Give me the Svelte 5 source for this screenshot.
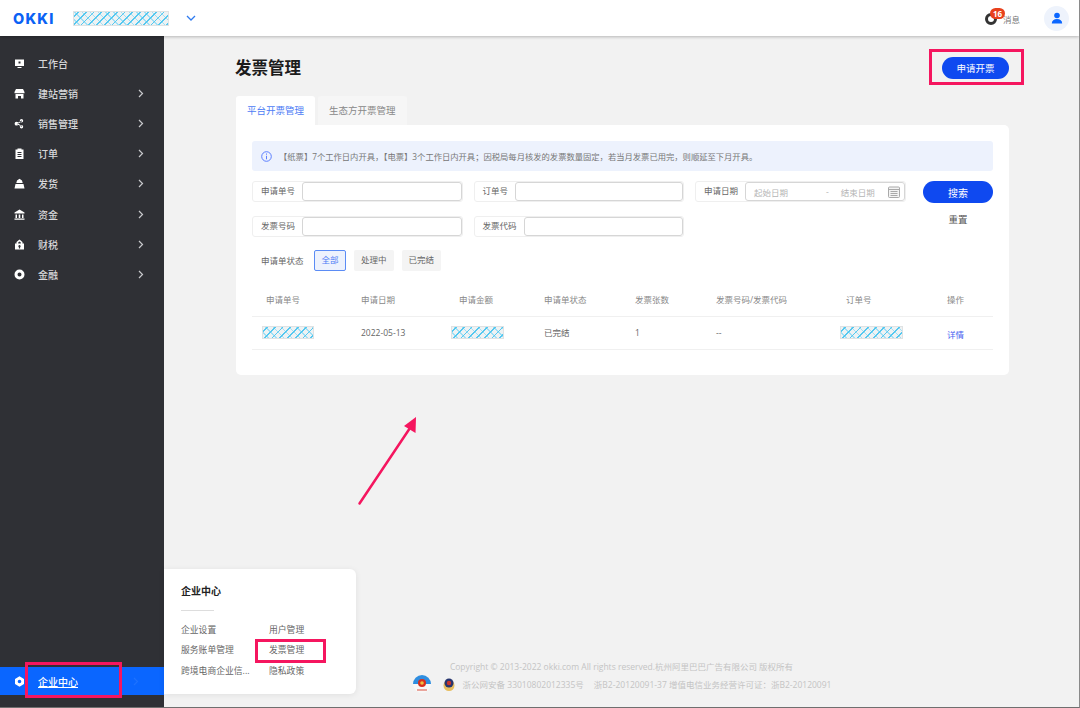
<script>
  const menu = [
    { label: '工作台', icon: 'desk' },
    { label: '建站营销', icon: 'shop', more: true },
    { label: '销售管理', icon: 'share', more: true },
    { label: '订单', icon: 'order', more: true },
    { label: '发货', icon: 'ship', more: true },
    { label: '资金', icon: 'bank', more: true },
    { label: '财税', icon: 'tax', more: true },
    { label: '金融', icon: 'coin', more: true }
  ];

  const icons = {
    desk: 'M1 1.500h9v6.500H1z M4.500 3.500v2h2v-2z M3.500 9h4v1h-4z',
    shop: 'M2 1h7l1.500 3v1.200h-10V4z M1.500 6h8v4.500H7V8H4v2.500H1.500z',
    share: 'M7.500 1a1.700 1.700 0 1 1 0 3.400a1.700 1.700 0 0 1 0-3.400z M2.500 3.800a1.900 1.900 0 1 1 0 3.800a1.900 1.900 0 0 1 0-3.800z M7.500 7a1.700 1.700 0 1 1 0 3.400a1.700 1.700 0 0 1 0-3.400z M3.500 5l4-2.500.5.700-4 2.500z M4 5.500l4 2.500-.5.700-4-2.500z',
    order: 'M1.500 1.500h2V.5h4v1h2v9.500h-8z M3.500 4v1h4V4z M3.500 6v1h4V6z M3.500 8v1h4V8z',
    ship: 'M5.500.8l2.500 1.700.7 2.500H2.300L3 2.500z M1.500 6h8l1 4.500h-10z',
    bank: 'M5.500.5l5 3v1h-10v-1z M1.500 5.500h1.500v3.500H1.500z M4.700 5.500h1.600v3.500H4.700z M8 5.500h1.500v3.500H8z M.5 9.500h10v1.200H.5z',
    tax: 'M5.500.5l3 2.500v1.500h1.500v6H1v-6h1.500V3z M4.200 4.500h2.600V3.600L5.500 2.500 4.200 3.600z M5.500 6a1.200 1.200 0 0 0-.6 2.200V9.500h1.200V8.200A1.200 1.200 0 0 0 5.500 6z',
    coin: 'M5.500.5a5 5 0 1 1 0 10a5 5 0 0 1 0-10z M5.500 3.500a2 2 0 1 0 0 4a2 2 0 0 0 0-4z',
    gear: 'M5.500.3l4.500 2.600v5.200l-4.500 2.600L1 8.100V2.900z M5.500 3.700a1.800 1.800 0 1 0 0 3.600a1.800 1.800 0 0 0 0-3.600z'
  };

  const columns = ['申请单号', '申请日期', '申请金额', '申请单状态', '发票张数', '发票号码/发票代码', '订单号', '操作'];
  const links = ['企业设置', '用户管理', '服务账单管理', '发票管理', '跨境电商企业信...', '隐私政策'];
</script>

<div class="page">
  <header class="topbar">
    <span class="logo">OKKI</span>
    <span class="mosaic company"></span>
    <svg class="caret" width="10" height="6" viewBox="0 0 10 6"><path d="M1 1l4 4 4-4" fill="none" stroke="#2f7bf0" stroke-width="1.300" /></svg>
    <div class="top-right">
      <div class="msg">
        <span class="ring"></span>
        <span class="badge">16</span>
        <span class="msg-text">消息</span>
      </div>
      <div class="avatar">
        <svg width="12" height="12" viewBox="0 0 12 12"><circle cx="6" cy="3.500" r="2.800" fill="#0a66ff" /><path d="M.8 11.500c0-3 2.200-4.500 5.200-4.500s5.200 1.500 5.200 4.500z" fill="#0a66ff" /></svg>
      </div>
    </div>
  </header>

  <div class="body">
    <aside class="sidebar">
      <nav class="nav">
        {#each menu as item}
          <div class="nav-item">
            <svg class="nav-icon" width="11" height="11" viewBox="0 0 11 11"><path d={icons[item.icon]} fill="#fff" fill-rule="evenodd" /></svg>
            <span>{item.label}</span>
            {#if item.more}
              <svg class="chev" width="6" height="9" viewBox="0 0 6 9"><path d="M1 1l3.500 3.500L1 8" fill="none" stroke="#c9cacd" stroke-width="1.200" /></svg>
            {/if}
          </div>
        {/each}
      </nav>
      <div class="nav-item active">
        <svg class="nav-icon" width="11" height="11" viewBox="0 0 11 11"><path d={icons.gear} fill="#fff" fill-rule="evenodd" /></svg>
        <span class="active-label">企业中心</span>
        <svg class="chev dim" width="6" height="9" viewBox="0 0 6 9"><path d="M1 1l3.500 3.500L1 8" fill="none" stroke="#1d72ff" stroke-width="1.200" /></svg>
      </div>
    </aside>

    <main class="main">
      <div class="content">
        <div class="head">
          <h1>发票管理</h1>
          <button class="pill apply">申请开票</button>
        </div>

        <div class="tabs">
          <div class="tab current">平台开票管理</div>
          <div class="tab">生态方开票管理</div>
        </div>

        <section class="card">
          <div class="alert">
            <svg width="11" height="11" viewBox="0 0 11 11"><circle cx="5.500" cy="5.500" r="4.800" fill="none" stroke="#5b7fff" stroke-width="1" /><path d="M5.500 2.500v1.200M5.500 4.800v3.500" stroke="#5b7fff" stroke-width="1" /></svg>
            <span>【纸票】7个工作日内开具，【电票】3个工作日内开具；因税局每月核发的发票数量固定，若当月发票已用完，则顺延至下月开具。</span>
          </div>

          <div class="form">
            <div class="fields">
              <div class="group"><label for="f1">申请单号</label><input id="f1" /></div>
              <div class="group"><label for="f2" class="tight">订单号</label><input id="f2" /></div>
              <div class="group">
                <span class="group-label">申请日期</span>
                <div class="range">
                  <span>起始日期</span>
                  <span class="dash">-</span>
                  <span class="end">结束日期</span>
                  <svg width="12" height="12" viewBox="0 0 12 12"><rect x=".5" y="1" width="11" height="10.500" rx="1" fill="#f3f3f3" stroke="#a9a9a9" /><path d="M.5 3.500h11M2.500 5.500h7M2.500 7.500h7M2.500 9.500h7" stroke="#a9a9a9" /></svg>
                </div>
              </div>
              <div class="group"><label for="f3">发票号码</label><input id="f3" /></div>
              <div class="group"><label for="f4">发票代码</label><input id="f4" /></div>
            </div>
            <div class="actions">
              <button class="pill search">搜索</button>
              <span class="reset">重置</span>
            </div>
          </div>

          <div class="status">
            <span class="status-label">申请单状态</span>
            <span class="chip on">全部</span>
            <span class="chip">处理中</span>
            <span class="chip">已完结</span>
          </div>

          <div class="table">
            <div class="row">
              {#each columns as col}
                <span class="th">{col}</span>
              {/each}
            </div>
            <div class="row">
              <span class="mosaic m1"></span>
              <span>2022-05-13</span>
              <span class="mosaic m2"></span>
              <span>已完结</span>
              <span>1</span>
              <span>--</span>
              <span class="mosaic m3"></span>
              <span class="detail">详情</span>
            </div>
          </div>
        </section>
      </div>

      <footer class="footer">
        <div>Copyright © 2013-2022 okki.com All rights reserved.杭州阿里巴巴广告有限公司 版权所有</div>
        <div class="beian">
          <svg width="20" height="19" viewBox="0 0 20 19"><circle cx="10" cy="9" r="9" fill="#f8f8f8" /><path d="M1 9a9 9 0 0 1 18 0z" fill="#2f8ee0" /><circle cx="10" cy="8" r="4" fill="#d8301f" /><circle cx="10" cy="8" r="1.800" fill="#f0c040" /><path d="M5 15h10" stroke="#e58a7e" stroke-width="1.500" /></svg>
          <svg class="police" width="12" height="15" viewBox="0 0 12 15"><circle cx="6" cy="8.500" r="5.500" fill="#e7bd5d" /><circle cx="6" cy="6" r="4.500" fill="#27366f" /><circle cx="6" cy="6" r="2.200" fill="#c9352b" /></svg>
          <span>浙公网安备 33010802012335号</span>
          <span class="lic">浙B2-20120091-37 增值电信业务经营许可证：浙B2-20120091</span>
        </div>
      </footer>
    </main>
  </div>

  <div class="popover">
    <div class="pop-title">企业中心</div>
    <div class="pop-line"></div>
    <div class="pop-links">
      {#each links as link}
        <span>{link}</span>
      {/each}
    </div>
  </div>

  <div class="mark mark-apply"></div>
  <div class="mark mark-side"></div>
  <div class="mark mark-link"></div>
  <svg class="arrow" width="70" height="100" viewBox="0 0 70 100">
    <path d="M9.500 93.500L60 18" stroke="#f5165f" stroke-width="2.500" stroke-linecap="round" />
    <path d="M66 7L65.500 23L54 16z" fill="#f5165f" />
  </svg>
</div>

<style>
  :global(body) {
    margin: 0;
    background: #f2f2f2;
  }

  .page {
    position: relative;
    width: 1080px;
    height: 708px;
    box-sizing: border-box;
    border-right: 1px solid #8a8a8a;
    border-bottom: 1px solid #6f6f6f;
    display: flex;
    flex-direction: column;
    overflow: hidden;
    font-family: "Open Sans", "Noto Sans CJK SC", sans-serif;
    font-size: 8.500px;
    color: #666;
    background: #f2f2f2;
  }

  .mosaic {
    display: block;
    box-sizing: border-box;
    border: 1px solid #dfe2e3;
    background-color: #eef2f3;
    background-image:
      repeating-linear-gradient(135deg, transparent 0 2.500px, #55c8f0 2.500px 3.700px, transparent 3.700px 5.500px),
      repeating-linear-gradient(45deg, transparent 0 3.500px, #9fdff5 3.500px 4.500px, transparent 4.500px 5.500px);
  }

  .topbar {
    height: 36px;
    flex: none;
    display: flex;
    align-items: center;
    background: #fff;
    box-shadow: 0 1px 3px rgba(0, 0, 0, 0.25);
    position: relative;
    z-index: 2;
    padding: 0 10px 0 13px;
  }

  .logo {
    width: 60px;
    color: #0a62f5;
    font-family: "Inter", "Liberation Sans", sans-serif;
    font-weight: 800;
    font-size: 14.500px;
    letter-spacing: 1.200px;
  }

  .company {
    width: 96px;
    height: 15px;
  }

  .caret {
    margin-left: 17px;
  }

  .top-right {
    margin-left: auto;
    display: flex;
    align-items: center;
    gap: 24px;
  }

  .msg {
    position: relative;
    width: 35px;
    height: 24px;
  }

  .ring {
    position: absolute;
    left: 0;
    top: 7px;
    width: 6px;
    height: 6px;
    border: 3px solid #333;
    border-radius: 50%;
  }

  .badge {
    position: absolute;
    left: 5px;
    top: 2px;
    width: 15px;
    height: 11px;
    border-radius: 6px;
    background: #e8401c;
    color: #fff;
    font-size: 8px;
    font-weight: 700;
    line-height: 11px;
    text-align: center;
  }

  .msg-text {
    position: absolute;
    left: 18px;
    top: 8px;
    font-size: 8.500px;
    line-height: 12px;
    color: #777;
  }

  .avatar {
    width: 25px;
    height: 25px;
    border-radius: 50%;
    background: #eef3fc;
    display: flex;
    align-items: center;
    justify-content: center;
  }

  .body {
    flex: 1;
    display: flex;
    min-height: 0;
  }

  .sidebar {
    width: 164px;
    flex: none;
    background: #2f3035;
    display: flex;
    flex-direction: column;
  }

  .nav {
    padding-top: 12px;
  }

  .nav-item {
    height: 30.200px;
    display: flex;
    align-items: center;
    padding-left: 14px;
    color: #d8d8da;
    font-size: 10px;
    font-weight: 500;
    position: relative;
  }

  .nav-icon {
    margin-right: 13px;
  }

  .chev {
    position: absolute;
    left: 138px;
  }

  .chev.dim {
    left: 133px;
  }

  .active {
    height: 28px;
    margin-top: auto;
    margin-bottom: 12px;
    background: #0a66ff;
    color: #fff;
  }

  .active-label {
    text-decoration: underline;
  }

  .main {
    flex: 1;
    display: flex;
    flex-direction: column;
    min-width: 0;
  }

  .content {
    width: 773px;
    margin-left: 72px;
    padding-top: 21px;
  }

  .head {
    display: flex;
    align-items: center;
    justify-content: space-between;
    height: 21px;
  }

  h1 {
    margin: -2px 0 0 -1px;
    font-size: 16.500px;
    font-weight: 700;
    color: #1c1c1c;
  }

  .pill {
    border: none;
    border-radius: 12px;
    background: #0f49f0;
    color: #fff;
    font-family: inherit;
    padding: 0;
  }

  .apply {
    width: 67px;
    height: 22px;
    font-size: 9.500px;
  }

  .tabs {
    display: flex;
    gap: 3px;
    margin-top: 18px;
  }

  .tab {
    height: 29px;
    line-height: 29px;
    padding: 0 11px;
    font-size: 9.500px;
    color: #888;
    background: #f6f6f6;
    border-radius: 3px 3px 0 0;
  }

  .tab.current {
    background: #fff;
    color: #4d7cf5;
  }

  .card {
    height: 250px;
    box-sizing: border-box;
    padding: 16px;
    background: #fff;
    border-radius: 0 5px 5px 5px;
  }

  .alert {
    height: 30px;
    display: flex;
    align-items: center;
    gap: 7px;
    padding-left: 9px;
    background: #edf2fd;
    border-radius: 3px;
    font-size: 8.300px;
    color: #777;
  }

  .form {
    display: flex;
    justify-content: space-between;
    margin-top: 10px;
  }

  .fields {
    display: grid;
    grid-template-columns: repeat(3, 210.500px);
    column-gap: 11px;
    row-gap: 14px;
  }

  .group {
    height: 21px;
    box-sizing: border-box;
    display: flex;
    border: 1px solid #efefef;
    border-radius: 3px;
  }

  .group label,
  .group-label {
    flex: none;
    padding: 0 7px 0 8px;
    line-height: 18px;
    color: #666;
  }

  .group label.tight {
    padding-right: 7px;
  }

  .group input {
    flex: 1;
    min-width: 0;
    box-sizing: border-box;
    border: 1px solid #d6d6d6;
    border-radius: 3px;
    background: #fff;
    outline: none;
    padding: 0;
  }

  .range {
    flex: 1;
    display: flex;
    align-items: center;
    border: 1px solid #d6d6d6;
    border-radius: 3px;
    padding: 0 4px 0 8px;
    color: #b5b5b5;
  }

  .dash {
    margin-left: 38px;
  }

  .end {
    margin-left: 12px;
  }

  .range svg {
    margin-left: auto;
  }

  .actions {
    width: 70px;
    display: flex;
    flex-direction: column;
    align-items: center;
  }

  .search {
    width: 70px;
    height: 22px;
    font-size: 10px;
  }

  .reset {
    margin-top: 10px;
    font-size: 9.500px;
    line-height: 14px;
    color: #555;
  }

  .status {
    display: flex;
    align-items: center;
    height: 21px;
    margin-top: 13px;
    padding-left: 9px;
  }

  .status-label {
    width: 53px;
    margin-top: -1px;
  }

  .chip {
    height: 21px;
    line-height: 20px;
    padding: 0 7px;
    margin-right: 8px;
    border-radius: 2px;
    background: #f4f4f4;
    color: #666;
  }

  .chip.on {
    box-sizing: border-box;
    width: 32px;
    padding: 0;
    text-align: center;
    line-height: 18px;
    background: #edf2fd;
    border: 1px solid #5b8cf5;
    color: #4d7cf5;
  }

  .table {
    margin-top: 13px;
  }

  .row {
    display: grid;
    grid-template-columns: 95px 98px 85px 91px 81px 130px 101px 1fr;
    align-items: center;
    box-sizing: border-box;
    height: 33px;
    padding: 0 0 2px 14px;
    border-bottom: 1px solid #f0f0f0;
  }

  .th {
    color: #888;
  }

  .m1 {
    width: 52px;
    height: 13px;
    margin-left: -4px;
  }

  .m2 {
    width: 53px;
    height: 13px;
    margin-left: -8px;
  }

  .m3 {
    width: 63px;
    height: 13px;
    margin-left: -6px;
  }

  .detail {
    color: #4a63f0;
    margin-top: 3px;
  }

  .footer {
    margin-top: auto;
    margin-bottom: 13px;
    text-align: center;
    font-size: 8.500px;
    line-height: 14px;
    color: #c4c4c4;
  }

  .beian {
    display: flex;
    align-items: center;
    justify-content: center;
    margin-top: 1px;
    height: 19px;
  }

  .police {
    margin: 0 8px 0 11px;
  }

  .lic {
    margin-left: 10px;
  }

  .popover {
    position: absolute;
    left: 164px;
    top: 569px;
    width: 192px;
    height: 125px;
    box-sizing: border-box;
    padding: 15px 17px;
    background: #fff;
    border-radius: 0 6px 6px 0;
    box-shadow: 0 1px 6px rgba(0, 0, 0, 0.08);
    z-index: 3;
  }

  .pop-title {
    font-size: 10px;
    font-weight: 700;
    line-height: 14px;
    color: #222;
  }

  .pop-line {
    width: 33px;
    height: 1px;
    background: #ddd;
    margin: 12px 0 8px;
  }

  .pop-links {
    display: grid;
    grid-template-columns: 88px 1fr;
    grid-auto-rows: 20.500px;
    align-items: center;
    font-size: 8.800px;
    color: #666;
    white-space: nowrap;
  }

  .mark {
    position: absolute;
    box-sizing: border-box;
    border: 3px solid #f5165f;
    z-index: 4;
  }

  .mark-apply {
    left: 929px;
    top: 49px;
    width: 95px;
    height: 36px;
  }

  .mark-side {
    left: 25px;
    top: 662px;
    width: 97px;
    height: 36px;
  }

  .mark-link {
    left: 255px;
    top: 639px;
    width: 71px;
    height: 24px;
  }

  .arrow {
    position: absolute;
    left: 350px;
    top: 410px;
    z-index: 4;
  }
</style>
